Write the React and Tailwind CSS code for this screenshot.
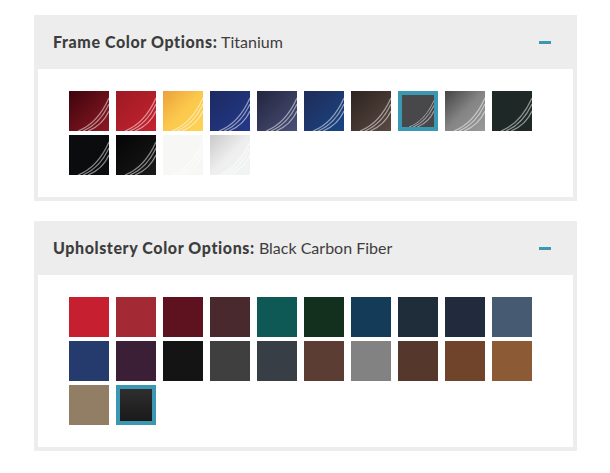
const FRAME = [
  { cls: 'bg-linear-to-br from-[#3e050c] to-[#8e1a25]' },
  { cls: 'bg-linear-to-br from-[#9c1a24] to-[#c6232f]' },
  { cls: 'bg-linear-to-br from-[#eba03a] via-[#fbc84c] to-[#fdd455]' },
  { cls: 'bg-linear-to-br from-[#1c2a62] to-[#24398a]' },
  { cls: 'bg-linear-to-br from-[#23263f] to-[#4a5078]' },
  { cls: 'bg-linear-to-br from-[#1f2c58] to-[#164585]' },
  { cls: 'bg-linear-to-br from-[#2d2320] to-[#5a4a42]' },
  { cls: 'bg-[#48474a]', selected: true },
  { cls: 'bg-linear-to-br from-[#454545] via-[#858585] to-[#9a9a9a]' },
  { cls: 'bg-[#1e2826]' },
  { cls: 'bg-[#0b0c0d]' },
  { cls: 'bg-linear-to-br from-[#050505] to-[#1a1a1a]' },
  { cls: 'bg-[#f7f7f5]', light: true },
  { cls: 'bg-linear-to-br from-[#c9c9c9] via-[#eeeeee] to-[#f3f5f5]', light: true },
];

const UPHOLSTERY = [
  'bg-[#c61f30]', 'bg-[#a32a34]', 'bg-[#5e111e]', 'bg-[#4a292e]', 'bg-[#0e5956]',
  'bg-[#13301f]', 'bg-[#143c58]', 'bg-[#1f2d3b]', 'bg-[#222b3e]', 'bg-[#465a72]',
  'bg-[#253a6d]', 'bg-[#3a1f37]', 'bg-[#141414]', 'bg-[#3e3f3e]', 'bg-[#383e46]',
  'bg-[#5c3d33]', 'bg-[#828282]', 'bg-[#56372b]', 'bg-[#70442b]', 'bg-[#8d5a36]',
  'bg-[#917e64]',
];

// the shiny streaks drawn over each frame finish
function Gloss({ light }) {
  return (
    <svg viewBox="0 0 40 40" className="absolute inset-0 h-full w-full">
      <g fill="none" stroke="#fff" strokeWidth="1.3" opacity={light ? 0.6 : 0.5}>
        <path d="M9 40 C22 35 32 25 40 7" />
        <path d="M14 40 C26 35 34 26 40 13" />
        <path d="M19 40 C29 36 36 29 40 20" />
      </g>
    </svg>
  );
}

function Swatch({ cls, selected, gloss, light }) {
  if (selected) {
    return (
      <div className="h-10 w-10 border-4 border-[#3a98b3]">
        <div className={`relative h-full w-full overflow-hidden ${cls}`}>
          {gloss && <Gloss light={light} />}
        </div>
      </div>
    );
  }
  return (
    <div className={`relative h-10 w-10 overflow-hidden ${cls}`}>
      {gloss && <Gloss light={light} />}
    </div>
  );
}

function Panel({ label, value, children }) {
  return (
    <div className="border-4 border-t-0 border-[#ededed] bg-[#ededed]">
      <div className="flex h-[54px] items-center justify-between pl-[15px] pr-[22px]">
        <div className="text-[16px] text-[#3d3d3d]">
          <span className="font-black tracking-[0.6px]">{label}</span> <span>{value}</span>
        </div>
        <div className="h-[3px] w-3 bg-[#3a98b3]" />
      </div>
      <div className="bg-white py-[22px] pl-[31px]">
        <div className="flex w-[463px] flex-wrap gap-x-[7px] gap-y-1">{children}</div>
      </div>
    </div>
  );
}

export default function App() {
  return (
    <div className="min-h-[473px] bg-white pl-[34px] pt-[15px]" style={{ fontFamily: 'Lato, "Noto Sans", sans-serif' }}>
      <div className="flex w-[543px] flex-col gap-5">
        <Panel label="Frame Color Options:" value="Titanium">
          {FRAME.map((s, i) => (
            <Swatch key={i} cls={s.cls} selected={s.selected} light={s.light} gloss />
          ))}
        </Panel>
        <Panel label="Upholstery Color Options:" value="Black Carbon Fiber">
          {UPHOLSTERY.map((c, i) => (
            <Swatch key={i} cls={c} />
          ))}
          <Swatch cls="bg-linear-to-b from-[#2e2e2e] to-[#1a1a1a]" selected />
        </Panel>
      </div>
    </div>
  );
}
